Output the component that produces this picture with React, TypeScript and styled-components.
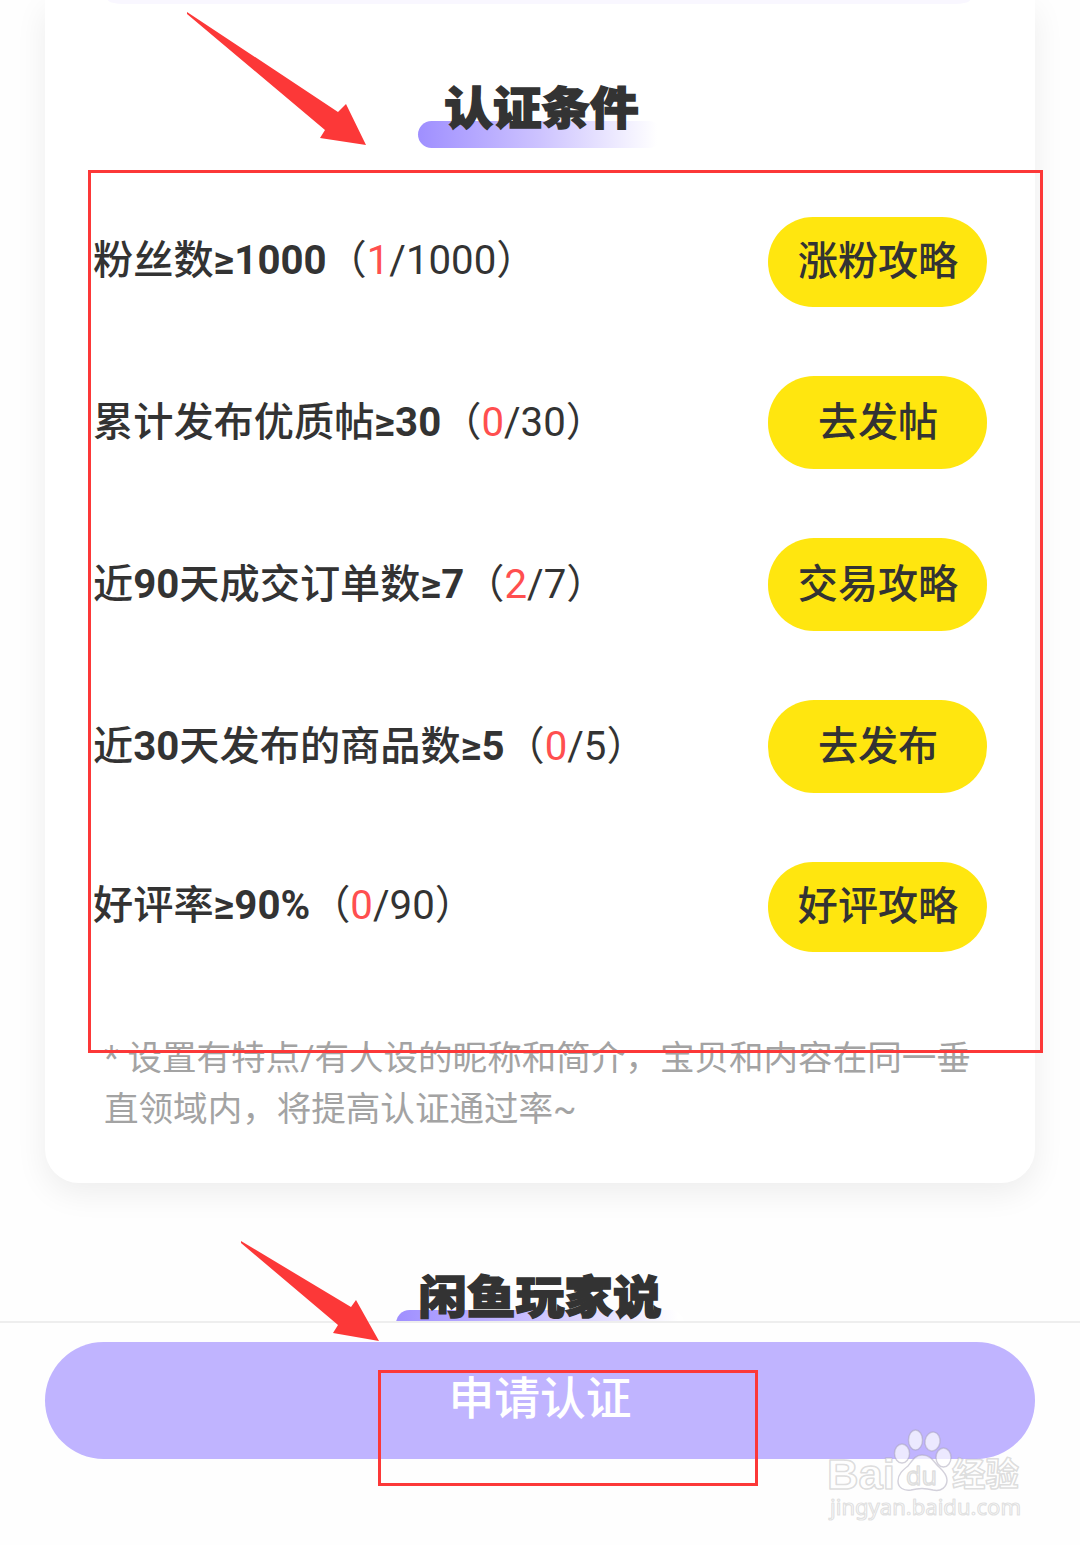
import React from "react";
import styled, { createGlobalStyle } from "styled-components";

const GlobalStyle = createGlobalStyle`
  *, *::before, *::after { box-sizing: border-box; }
  html, body { margin: 0; padding: 0; background: #fff; }
  body { font-family: Roboto, "Noto Sans CJK SC", sans-serif; color: #333; }
`;

const Screen = styled.div`
  position: relative;
  display: flex;
  flex-direction: column;
  width: 1080px;
  height: 1545px;
  overflow: hidden;
  background: #fefefe;
`;

const Content = styled.main`
  flex: none;
  height: 1321px;
  overflow: hidden;
  padding: 0 45px;
`;

const Card = styled.section`
  display: flex;
  flex-direction: column;
  height: 1183px;
  padding: 0 43px 0 48px;
  background: #fff;
  border-radius: 0 0 34px 34px;
  box-shadow: 0 10px 32px rgba(0, 0, 0, 0.07);
`;

const PreviousPanel = styled.div`
  flex: none;
  width: 862px;
  height: 4px;
  margin-left: 15px;
  border-radius: 0 0 16px 16px / 0 0 4px 4px;
  background: #f9f7ff;
`;

const Heading = styled.h2<{ $top: number; $width: number; $shift: number }>`
  position: relative;
  display: flex;
  justify-content: center;
  flex: none;
  width: ${(p) => p.$width}px;
  height: 70px;
  margin: ${(p) => p.$top}px auto 0;
  left: ${(p) => p.$shift}px;
  font-size: 48.6px;
  line-height: 66px;
  font-weight: 900;
  white-space: nowrap;
  -webkit-text-stroke: 1.6px #333;

  &::before {
    content: "";
    position: absolute;
    inset: auto 0 0 0;
    height: 27px;
    border-radius: 14px;
    background: linear-gradient(90deg, #9f8fff 0%, #cdc3ff 50%, #fff 98%);
  }
`;

const HeadingText = styled.span<{ $nudge?: number }>`
  position: relative;
  transform: translate(${(p) => p.$nudge ?? 0}px, -1px) scaleY(0.94);
`;

const Conditions = styled.ul`
  display: flex;
  flex-direction: column;
  gap: 69px;
  flex: none;
  margin: 69px 0 0;
  padding: 0;
  list-style: none;
`;

const Requirement = styled.div`
  padding-top: 1px;
  font-size: 40.2px;
  line-height: 60px;
  font-weight: 400;
  white-space: nowrap;
`;

const Label = styled.span`
  font-weight: 500;

  b { font-weight: 700; }
`;

const Current = styled.span`
  color: #ff4f4f;
`;

const GuideButton = styled.button`
  flex: none;
  display: flex;
  align-items: center;
  justify-content: center;
  width: 219px;
  height: 100%;
  padding: 1px 0 0 1px;
  border: 0;
  border-radius: 46px;
  background: #ffe60f;
  color: #333;
  font: 500 40.1px/60px Roboto, "Noto Sans CJK SC", sans-serif;
`;

const Condition = styled.li`
  display: flex;
  align-items: center;
  justify-content: space-between;
  height: 93px;
  padding-right: 5px;

  &:first-child, &:last-child {
    height: 90px;

    ${Requirement} { padding: 0 0 2px; }
    ${GuideButton} { padding: 0 0 1px 1px; }
  }
`;

const Note = styled.p`
  flex: none;
  margin: 81px 0 0 11px;
  font-size: 34.55px;
  line-height: 51px;
  color: #a3a3a3;
  white-space: pre;
`;

const Footer = styled.footer`
  flex: 1;
  border-top: 2px solid #eee;
  padding: 19px 45px 0;
  background: #fefefe;
`;

const ApplyButton = styled.button`
  display: flex;
  align-items: center;
  justify-content: center;
  width: 100%;
  height: 117px;
  padding: 0 0 2px;
  border: 0;
  border-radius: 59px;
  background: #c0b4ff;
  color: #fff;
  font: 500 45.8px/66px Roboto, "Noto Sans CJK SC", sans-serif;
`;

const Overlay = styled.svg`
  position: absolute;
  inset: 0;
  pointer-events: none;
`;

type Part = { text: string; strong?: boolean };
type Item = { label: Part[]; current: string; target: string; action: string };

const items: Item[] = [
  { label: [{ text: "粉丝数" }, { text: "≥1000", strong: true }], current: "1", target: "1000", action: "涨粉攻略" },
  { label: [{ text: "累计发布优质帖" }, { text: "≥30", strong: true }], current: "0", target: "30", action: "去发帖" },
  {
    label: [{ text: "近" }, { text: "90", strong: true }, { text: "天成交订单数" }, { text: "≥7", strong: true }],
    current: "2", target: "7", action: "交易攻略",
  },
  {
    label: [{ text: "近" }, { text: "30", strong: true }, { text: "天发布的商品数" }, { text: "≥5", strong: true }],
    current: "0", target: "5", action: "去发布",
  },
  { label: [{ text: "好评率" }, { text: "≥90%", strong: true }], current: "0", target: "90", action: "好评攻略" },
];

function Annotations() {
  return (
    <Overlay width="1080" height="1545" viewBox="0 0 1080 1545">
      <g fill="none" stroke="#fc3838" strokeWidth="3">
        <rect x="89.5" y="171.5" width="952" height="880" />
        <rect x="379.5" y="1371.5" width="377" height="113" />
      </g>
      <g fill="#fc3838">
        <path d="M187 12L338 112L346 104L366 145L320 138L325 130L187 14Z" />
        <path d="M241 1241L351 1307L356 1300L379 1341L333 1333L338 1325L241 1243Z" />
      </g>
    </Overlay>
  );
}

function Watermark() {
  return (
    <Overlay width="1080" height="1545" viewBox="0 0 1080 1545">
      <g fill="#fff" fillOpacity="0.7" stroke="#a8a4b8" strokeOpacity="0.5" strokeWidth="1.4" strokeLinejoin="round">
        <ellipse cx="902" cy="1453.5" rx="7.5" ry="9.5" />
        <ellipse cx="915.5" cy="1440" rx="7" ry="10" />
        <ellipse cx="932.5" cy="1441.5" rx="7.5" ry="9.5" transform="rotate(10 932.5 1441.5)" />
        <ellipse cx="943.5" cy="1457.5" rx="7.5" ry="9.5" />
        <path d="M922 1455C915 1455 912 1461 908 1466C903 1470 898 1474 898 1481C898 1488 904 1491 911 1490C918 1488 926 1488 933 1490C941 1492 947 1487 947 1480C947 1473 941 1469 937 1465C933 1460 930 1455 922 1455Z" />
      </g>
      <g fill="#fff" fillOpacity="0.9" stroke="#aaa" strokeOpacity="0.4" strokeWidth="1.5" strokeLinejoin="round">
        <text x="827" y="1489" fontFamily="Liberation Sans, Arial, sans-serif" fontWeight="700" fontSize="42" textLength="68" lengthAdjust="spacingAndGlyphs">Bai</text>
        <text x="906" y="1485" fontFamily="Open Sans, sans-serif" fontSize="25" textLength="31" lengthAdjust="spacingAndGlyphs">du</text>
        <text x="952" y="1486" fontFamily="Noto Sans CJK SC, sans-serif" fontWeight="700" fontSize="33" textLength="67" lengthAdjust="spacingAndGlyphs">经验</text>
        <text x="830" y="1515" fontFamily="Noto Sans, sans-serif" fontSize="22" strokeOpacity="0.36" strokeWidth="1.2" textLength="191" lengthAdjust="spacingAndGlyphs">jingyan.baidu.com</text>
      </g>
    </Overlay>
  );
}

export default function App() {
  return (
    <>
      <GlobalStyle />
      <Screen>
        <Content>
          <Card>
            <PreviousPanel />
            <Heading $top={74} $width={244} $shift={-3}>
              <HeadingText $nudge={2}>认证条件</HeadingText>
            </Heading>
            <Conditions>
              {items.map((item) => (
                <Condition key={item.action}>
                  <Requirement>
                    <Label>
                      {item.label.map((part, i) =>
                        part.strong ? <b key={i}>{part.text}</b> : <span key={i}>{part.text}</span>
                      )}
                    </Label>
                    （<Current>{item.current}</Current>/{item.target}）
                  </Requirement>
                  <GuideButton>{item.action}</GuideButton>
                </Condition>
              ))}
            </Conditions>
            <Note>{"* 设置有特点/有人设的昵称和简介，宝贝和内容在同一垂\n直领域内，将提高认证通过率~"}</Note>
          </Card>
          <Heading $top={84} $width={288} $shift={0}>
            <HeadingText>闲鱼玩家说</HeadingText>
          </Heading>
        </Content>
        <Footer>
          <ApplyButton>申请认证</ApplyButton>
        </Footer>
        <Annotations />
        <Watermark />
      </Screen>
    </>
  );
}
